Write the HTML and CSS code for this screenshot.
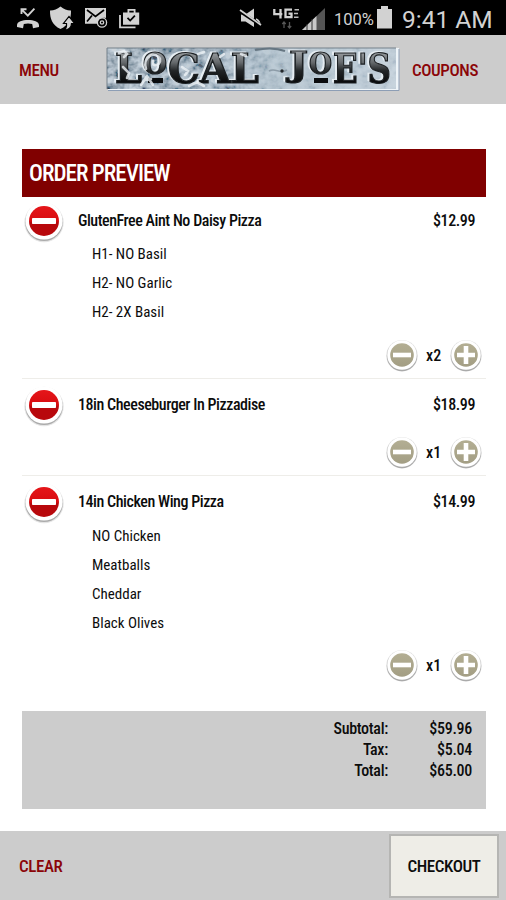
FILE: index.html
```html
<!DOCTYPE html>
<html lang="en">
<head>
<meta charset="utf-8">
<title>Order Preview</title>
<link rel="stylesheet" href="styles.css">
</head>
<body>
<svg class="defs" width="0" height="0" aria-hidden="true">
  <defs>
    <linearGradient id="red" x1="0" y1="0" x2="0" y2="1"><stop offset="0" stop-color="#e5161a"/><stop offset=".5" stop-color="#d80c10"/><stop offset=".55" stop-color="#b8080c"/><stop offset="1" stop-color="#b8080c"/></linearGradient>
    <linearGradient id="tan" x1="0" y1="0" x2="0" y2="1"><stop offset="0" stop-color="#b3ae93"/><stop offset="1" stop-color="#a39e84"/></linearGradient>
    <symbol id="remove" viewBox="0 0 42 42">
      <circle cx="21" cy="21.500" r="19.700" fill="#999" opacity=".25"/><circle cx="21" cy="21.300" r="18.800" fill="#aaa"/><circle cx="21" cy="20" r="18.600" fill="#fff"/>
      <circle cx="21" cy="20" r="15" fill="url(#red)"/><rect x="9" y="17" width="24" height="6" rx=".8" fill="#fff"/>
    </symbol>
    <symbol id="minus" viewBox="0 0 34 34">
      <circle cx="17" cy="16.700" r="15.700" fill="#999" opacity=".3"/><circle cx="17" cy="17" r="15.200" fill="#aaa"/><circle cx="17" cy="16" r="14.800" fill="#fff"/>
      <circle cx="17" cy="16" r="11.800" fill="url(#tan)"/><rect x="8" y="13.700" width="18" height="4.600" fill="#fff"/>
    </symbol>
    <symbol id="plus" viewBox="0 0 34 34">
      <circle cx="17" cy="16.700" r="15.700" fill="#999" opacity=".3"/><circle cx="17" cy="17" r="15.200" fill="#aaa"/><circle cx="17" cy="16" r="14.800" fill="#fff"/>
      <circle cx="17" cy="16" r="11.800" fill="url(#tan)"/><path d="M8 13.700h6.700V7h4.600v6.700H26v4.600h-6.700V25h-4.600v-6.700H8z" fill="#fff"/>
    </symbol>
  </defs>
</svg>

<div class="status">
  <svg class="notifications" width="150" height="35" viewBox="0 0 150 35" fill="#d2d2d2">
    <path d="M17 25.200c0-6.800 22-6.800 22 0v1.900l-6 1.100-.8-4.200c-2.800-.8-5.600-.8-8.400 0l-.8 4.200-6-1.100z"/>
    <path d="M21.500 14V9.300h5M22 9.800l5.800 5.800 6.600-7" fill="none" stroke="#d2d2d2" stroke-width="1.900"/>
    <path d="M50 10.500c4 .1 7-1.500 10.500-4 3.500 2.500 6.500 4.100 10.500 4 .1 8-2 14.500-10.500 18.500C52 25 49.900 18.500 50 10.500z"/>
    <path d="M62 30c4-.5 5-2.500 4.500-6.500h-3l5.500-7 5.500 7h-3c.2 4-3 7-9.500 6.500z" stroke="#000" stroke-width="1.200"/>
    <path d="M85 8h21v10c-5-.8-8 1.500-8.600 5.700H85z"/><path d="M87 10l8.500 6.500L104 10M87 21.500l5-6" fill="none" stroke="#000" stroke-width="1.700"/>
    <circle cx="102" cy="22.500" r="4.600" fill="none" stroke="#d2d2d2" stroke-width="1.300"/><circle cx="102" cy="22.500" r="1.700" fill="none" stroke="#d2d2d2" stroke-width="1.300"/>
    <path d="M123 12.500h4.500V9h8v3.500h3.700v12.300H123zM129.300 12.500h4.400v-1.700h-4.400z" fill-rule="evenodd"/><path d="M127.500 17.800l2.700 2.800 4.700-5" fill="none" stroke="#000" stroke-width="1.700"/>
    <path d="M120 15v12.300h15.500" fill="none" stroke="#d2d2d2" stroke-width="1.800"/>
  </svg>
  <div class="system">
    <svg width="90" height="35" viewBox="239 0 90 35">
      <path d="M241 14.500h4.500l8.500-6v18.500l-8.500-5.500H241z" fill="#d2d2d2"/><path d="M256 19c3 1.500 4 4 4 7" fill="none" stroke="#d2d2d2" stroke-width="1.700"/>
      <path d="M240 11.500l21 14" stroke="#000" stroke-width="3"/><path d="M240 10l21 15" stroke="#d2d2d2" stroke-width="1.800"/>
      <path d="M274.300 9v5.200h8M280.500 9v9.500M292 9.700h-6.500v7.500h6v-3.500h-3" fill="none" stroke="#d2d2d2" stroke-width="2.300"/>
      <path d="M294.500 9.800h4.500M294 13.500h4M294 17.200h4.500" stroke="#bbb" stroke-width="1.600"/>
      <path d="M284 22v6m-1.700-4l1.700-2 1.700 2M289.500 22v6m-1.700-2l1.700 2 1.700-2" fill="none" stroke="#555" stroke-width="1.300"/>
      <path d="M325 8v22h-23z" fill="#555"/><path d="M316.500 16v14H302z" fill="#c9c9c9"/><path d="M307 24v6M312 19v11" stroke="#333" stroke-width="1"/>
    </svg>
    <span class="percent">100%</span>
    <svg class="battery" width="15" height="23" viewBox="0 0 15 23"><path d="M0 3h4V0h7v3h4v19.500H0z" fill="#d2d2d2"/></svg>
    <span class="clock">9:41 AM</span>
  </div>
</div>

<header class="topbar">
  <a class="link menu">MENU</a>
  <svg class="logo" width="294" height="46" viewBox="0 0 294 46" role="img">
    <defs>
      <linearGradient id="metal" gradientUnits="userSpaceOnUse" x1="0" y1="4" x2="0" y2="37"><stop offset="0" stop-color="#a0a4a7"/><stop offset=".35" stop-color="#65696c"/><stop offset=".6" stop-color="#222527"/><stop offset="1" stop-color="#050607"/></linearGradient>
      <linearGradient id="sky" x1="0" x2="1"><stop offset="0" stop-color="#8496a5"/><stop offset=".4" stop-color="#9fb1c0"/><stop offset=".6" stop-color="#b5c5d0"/><stop offset="1" stop-color="#c3d0da"/></linearGradient>
      <linearGradient id="fade" x1="0" x2="1"><stop offset="0" stop-color="#ccc"/><stop offset=".42" stop-color="#777"/><stop offset=".6" stop-color="#222"/></linearGradient>
      <mask id="left"><rect width="294" height="46" fill="url(#fade)"/></mask>
      <filter id="frost" x="0" y="0" width="1" height="1"><feTurbulence type="fractalNoise" baseFrequency=".11 .13" numOctaves="3" seed="8"/><feColorMatrix values="2.200 0 0 0 -.6  2.200 0 0 0 -.53  2.200 0 0 0 -.47  0 0 0 0 .75"/></filter>
    </defs>
    <rect x="1" y="1" width="291" height="43" fill="#eef4f8"/>
    <rect x="0" y="1" width="289" height="41" fill="url(#sky)"/>
    <rect x="0" y="1" width="289" height="41" filter="url(#frost)" mask="url(#left)"/>
    <path d="M0 42V1h289" fill="none" stroke="#75818b"/><path d="M1 43.500h291V2" fill="none" stroke="#8d9eb5"/>
    <path d="M148 3c10-2 22-2 30 1" fill="none" stroke="#667682" stroke-width="2"/>
    <path d="M162 24c7-4 10 4 18-1" fill="none" stroke="#8d9ca8" stroke-width="1.500"/>
    <g class="logo-text"><text x="8" y="35.500" textLength="27" lengthAdjust="spacingAndGlyphs">L</text><text x="36" y="27" class="small" textLength="24" lengthAdjust="spacingAndGlyphs">O</text><text x="61" y="35.500" textLength="91" lengthAdjust="spacingAndGlyphs">CAL</text><text x="182" y="29" class="jay" textLength="19" lengthAdjust="spacingAndGlyphs">J</text><text x="202" y="27" class="small" textLength="23" lengthAdjust="spacingAndGlyphs">O</text><text x="226" y="35.500" textLength="58" lengthAdjust="spacingAndGlyphs">E'S</text></g>
    <path d="M41 33.500h15M207 33.500h14" stroke="#0b0d0f" stroke-width="5"/>
    <path d="M12 6l5-2 3 3-3 3M39 22c-4-13 10-19 14-10 1 8-9 8-7 2M16 20l6 6-2 5M34 38l6-9 6 9M38 33l6-1M75 20l6 4-3 4M82 39l8-4 7 4M91 7l6-2M113 10l4-3M134 7l5 2" fill="none" stroke="#eef3f6" stroke-width="2.600" stroke-linecap="round" opacity=".8"/>
    <circle cx="175" cy="24" r="1.700" fill="#23282c"/>
  </svg>
  <a class="link coupons">COUPONS</a>
</header>

<main class="order">
  <h1 class="title"><span>ORDER PREVIEW</span></h1>

  <section class="item first">
    <div class="line"><svg class="remove"><use href="#remove"/></svg><span class="name">GlutenFree Aint No Daisy Pizza</span><span class="price">$12.99</span></div>
    <ul class="options"><li>H1- NO Basil</li><li>H2- NO Garlic</li><li>H2- 2X Basil</li></ul>
    <div class="qty"><svg><use href="#minus"/></svg><span>x2</span><svg><use href="#plus"/></svg></div>
  </section>

  <section class="item">
    <div class="line"><svg class="remove"><use href="#remove"/></svg><span class="name">18in Cheeseburger In Pizzadise</span><span class="price">$18.99</span></div>
    <div class="qty"><svg><use href="#minus"/></svg><span>x1</span><svg><use href="#plus"/></svg></div>
  </section>

  <section class="item last">
    <div class="line"><svg class="remove"><use href="#remove"/></svg><span class="name">14in Chicken Wing Pizza</span><span class="price">$14.99</span></div>
    <ul class="options"><li>NO Chicken</li><li>Meatballs</li><li>Cheddar</li><li>Black Olives</li></ul>
    <div class="qty"><svg><use href="#minus"/></svg><span>x1</span><svg><use href="#plus"/></svg></div>
  </section>

  <dl class="totals">
    <dt>Subtotal:</dt><dd>$59.96</dd>
    <dt>Tax:</dt><dd>$5.04</dd>
    <dt>Total:</dt><dd>$65.00</dd>
  </dl>
</main>

<footer class="bottombar">
  <a class="link clear">CLEAR</a>
  <button class="checkout"><span>CHECKOUT</span></button>
</footer>
</body>
</html>
```
FILE: styles.css
```css
* { box-sizing: border-box; }
body {
  margin: 0;
  width: 506px;
  height: 900px;
  overflow: hidden;
  display: flex;
  flex-direction: column;
  background: #fff;
  color: #0c0c0c;
  font-family: "Roboto Condensed", Roboto, sans-serif;
  font-stretch: 75%;
  font-size: 16px;
  font-weight: 500;
  white-space: nowrap;
}
svg { display: block; flex: none; }
ul, dl, dd, h1 { margin: 0; padding: 0; }
.defs { position: absolute; }
.status {
  height: 35px;
  flex: none;
  background: #000;
  color: #d2d2d2;
  font-family: Roboto, sans-serif;
  font-stretch: 100%;
  font-weight: 400;
  display: flex;
}
.system { display: flex; margin-left: 89px; align-items: center; height: 35px; }
.percent { width: 43px; margin-left: 5px; font-size: 16.500px; padding-top: 3px; }
.battery { margin: 0 10px 0 0; }
.clock { font-size: 24.500px; padding-top: 4px; }
.topbar {
  height: 69px;
  flex: none;
  background: #ccc;
  display: flex;
  padding-top: 12px;
}
.link { color: #8b0508; font-size: 17px; line-height: 46px; letter-spacing: -.4px; }
.menu { width: 88px; padding-left: 19px; margin-right: 19px; }
.logo { overflow: visible; }
.logo-text {
  font-family: "DejaVu Serif", serif;
  font-size: 41px;
  font-weight: 700;
  fill: url(#metal);
  stroke: #1c2023;
  stroke-width: 1.2px;
  filter: drop-shadow(-1.5px -1px 0 #e6edf2);
}
.logo-text .small { font-size: 30px; }
.logo-text .jay { font-size: 34px; }
.coupons { margin-left: 11px; }
.order { width: 464px; margin: 45px 0 0 22px; flex: none; }
.title {
  height: 48px;
  background: #800000;
  color: #fff;
  font-size: 23px;
  font-weight: 500;
  line-height: 49px;
  letter-spacing: -.95px;
  padding-left: 7px;
}
.item { border-bottom: 1px solid #eeede9; display: flow-root; padding: 2px 0 5px; }
.item.first { padding-top: 0; }
.item.last { border: 0; height: 235px; }
.line { display: flex; height: 43px; line-height: 48px; padding-right: 11px; }
.remove { width: 42px; height: 42px; margin: 4px 13px 0 1px; }
.name { letter-spacing: -.45px; }
.price { margin-left: auto; letter-spacing: -.4px; }
.options { list-style: none; padding-left: 70px; font-size: 15px; font-weight: 400; line-height: 29px; }
.item.last .options { padding-top: 1px; margin-bottom: -1px; }
.qty { display: flex; justify-content: flex-end; align-items: center; height: 34px; margin-top: 12px; padding-right: 3px; }
.qty svg { width: 34px; height: 34px; }
.qty span { width: 30px; padding: 0 0 2px 7px; }
.totals {
  height: 98px;
  background: #ccc;
  display: grid;
  grid-template-columns: 366px 84px;
  grid-auto-rows: 21px;
  line-height: 21px;
  letter-spacing: -.3px;
  text-align: right;
  padding-top: 7px;
}
.bottombar {
  height: 69px;
  margin-top: auto;
  flex: none;
  background: #ccc;
  display: flex;
  padding: 3px 7px 0 19px;
  justify-content: space-between;
}
.clear { line-height: 64px; }
.checkout {
  width: 110px;
  height: 64px;
  padding: 0;
  border: 2px solid #b5b5b3;
  background: #eeede7;
  color: #0c0c0c;
  font: inherit;
  font-size: 17px;
  letter-spacing: -.4px;
}
```
